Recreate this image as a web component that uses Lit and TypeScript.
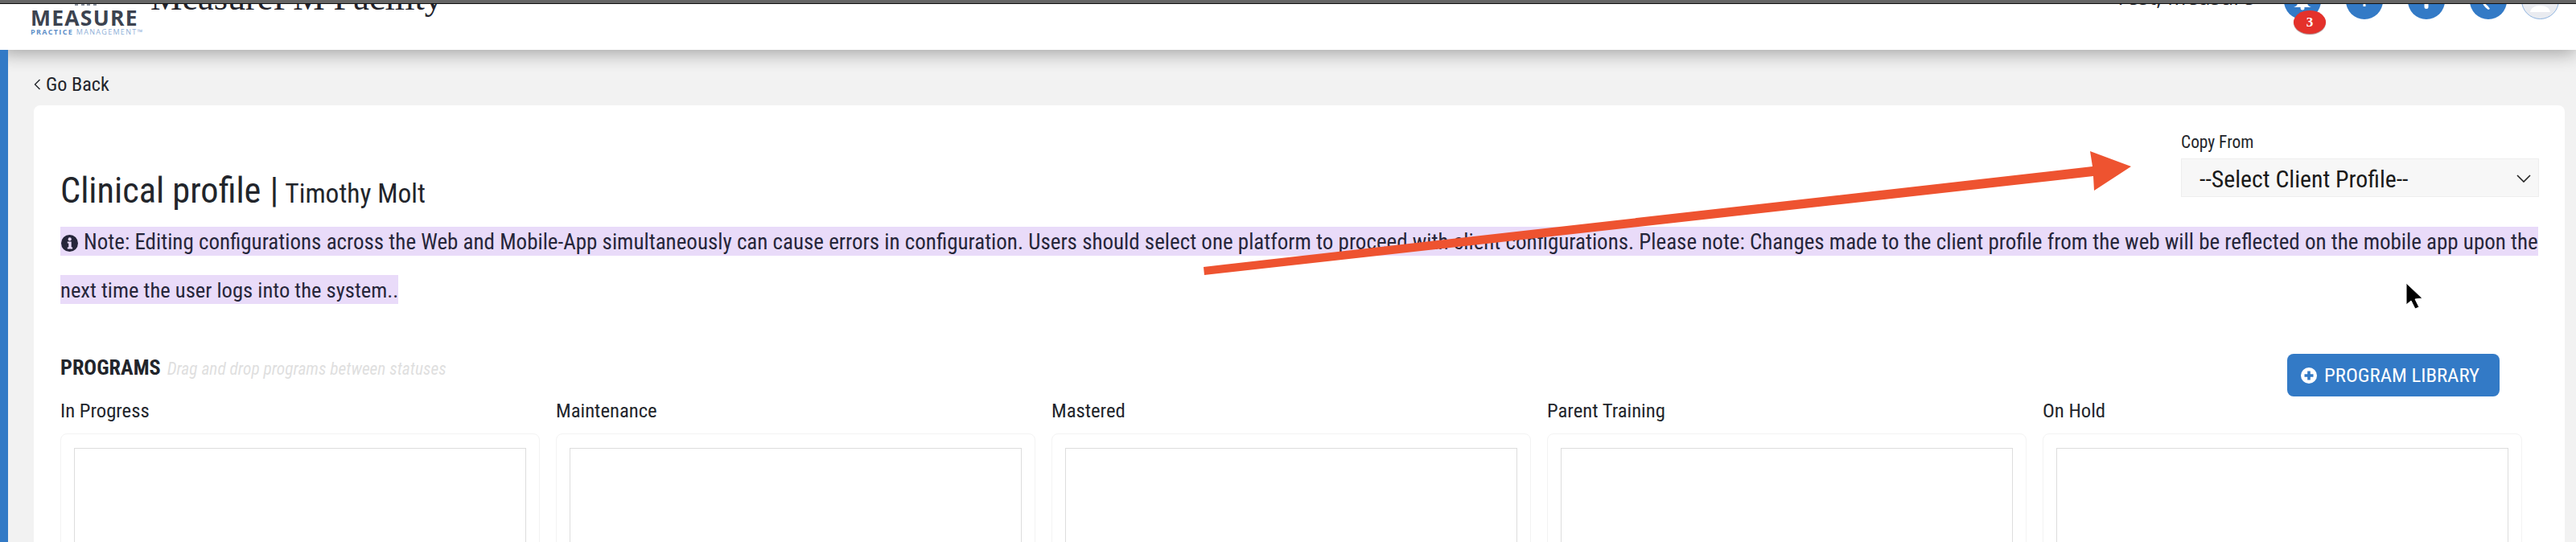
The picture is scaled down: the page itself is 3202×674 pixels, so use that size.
import { LitElement, html, css } from "lit";
import { customElement } from "lit/decorators.js";

const COLUMNS = ["In Progress", "Maintenance", "Mastered", "Parent Training", "On Hold"];

@customElement("app-root")
export class AppRoot extends LitElement {
  static styles = css`
    :host {
      display: flex;
      flex-direction: column;
      position: relative;
      width: 3202px;
      height: 674px;
      overflow: hidden;
      background: #f2f2f2;
      color: #22252b;
      font-family: "Roboto Condensed", "Open Sans", "Noto Sans", sans-serif;
    }
    .topbar {
      height: 4px;
      flex: none;
      background: #666;
      border-bottom: 1px solid #111;
      position: relative;
      z-index: 5;
    }
    .header {
      height: 57px;
      flex: none;
      display: flex;
      align-items: flex-end;
      padding: 0 21px 0 38px;
      background: #fff;
      overflow: hidden;
      position: relative;
      z-index: 3;
      box-shadow: 0 5px 22px rgba(0, 0, 0, 0.32);
    }
    .logo {
      display: flex;
      flex-direction: column;
      flex: none;
      width: 139px;
      padding-bottom: 18px;
    }
    .logo-bars {
      display: block;
      margin: 0 0 5px 55px;
    }
    .logo-word {
      font-family: "Open Sans", sans-serif;
      font-weight: 700;
      font-size: 26.5px;
      line-height: 20px;
      letter-spacing: 1.25px;
      color: #3c4350;
    }
    .logo-sub {
      font-family: "Open Sans", sans-serif;
      font-size: 9px;
      line-height: 9px;
      margin-top: 3px;
      letter-spacing: 1.32px;
      color: #8fb0d8;
      white-space: nowrap;
    }
    .logo-sub b {
      color: #5f8fc9;
      font-weight: 700;
    }
    .facility {
      flex: none;
      margin-left: 10px;
      padding-bottom: 42px;
      font-family: "Liberation Serif", serif;
      font-size: 44.3px;
      line-height: 44px;
      color: #23232b;
      white-space: nowrap;
    }
    .spacer {
      flex: 1;
    }
    .user {
      flex: none;
      font-family: "Open Sans", sans-serif;
      font-size: 26.5px;
      line-height: 30px;
      padding-bottom: 51px;
      margin-right: 37px;
      white-space: nowrap;
      color: #22252b;
    }
    .actions {
      display: flex;
      flex: none;
      align-items: flex-end;
      gap: 31px;
      padding-bottom: 38px;
    }
    .round {
      width: 46px;
      height: 46px;
      border-radius: 50%;
      background: #337ac6;
      flex: none;
    }
    .round svg {
      display: block;
    }
    .avatar {
      width: 47px;
      height: 47px;
      margin-left: -13px;
      box-sizing: border-box;
      background: #e9ebf0;
      border: 1px solid #8fb4e0;
      overflow: hidden;
    }
    .badge {
      position: absolute;
      left: 2851px;
      top: 13px;
      z-index: 5;
      width: 40px;
      height: 29px;
      border-radius: 50%;
      background: #e4312b;
      color: #fff;
      display: flex;
      align-items: center;
      justify-content: center;
      font: 700 17px/1 "Liberation Serif", serif;
      box-shadow: 0 1px 1px rgba(90, 0, 0, 0.5);
    }
    .main {
      flex: 1;
      display: flex;
      min-height: 0;
    }
    .rail {
      width: 10px;
      flex: none;
      background: #337ac6;
      position: relative;
      z-index: 4;
    }
    .content {
      flex: 1;
      min-width: 0;
      display: flex;
      flex-direction: column;
      padding: 0 14px 0 32px;
    }
    .back {
      flex: none;
      height: 52px;
      padding-top: 17px;
      display: flex;
      align-items: center;
      gap: 6px;
      font-size: 24.2px;
      line-height: 30px;
      color: #22252b;
    }
    .card {
      flex: 1;
      background: #fff;
      border-radius: 8px 8px 0 0;
      padding: 34px 32px 0 33px;
      min-height: 0;
      overflow: hidden;
    }
    .top {
      display: flex;
      justify-content: space-between;
      align-items: flex-start;
      height: 105px;
    }
    .title {
      margin: 47px 0 0;
      display: flex;
      align-items: baseline;
      font-size: 44.4px;
      line-height: 50px;
      font-weight: 400;
      color: #22252b;
    }
    .title .pipe {
      margin: 0 8px 0 11px;
    }
    .title small {
      font-size: 33.5px;
    }
    .copy {
      width: 445px;
      display: flex;
      flex-direction: column;
      gap: 8px;
    }
    .copy label {
      font-size: 21.4px;
      line-height: 24px;
    }
    .select {
      height: 48px;
      box-sizing: border-box;
      display: flex;
      align-items: center;
      justify-content: space-between;
      padding: 2px 9px 0 22px;
      background: #f7f7f7;
      border: 1px solid #eeeeee;
      font-size: 29.8px;
      color: #1a1a1a;
    }
    .note {
      margin: 0;
      font-size: 27px;
      color: #26263a;
      white-space: nowrap;
    }
    .line {
      display: flex;
      align-items: center;
      height: 60px;
    }
    .line-short {
      font-size: 26.6px;
    }
    .mark {
      line-height: 38px;
      height: 36px;
      background: #e9dbf9;
    }
    .note svg {
      vertical-align: -3px;
      margin: 0 7px 0 1px;
    }
    .prog-head {
      margin-top: 50px;
      height: 53px;
      display: flex;
      align-items: flex-start;
      justify-content: space-between;
      padding-right: 49px;
    }
    .prog-title {
      display: flex;
      align-items: baseline;
      gap: 8px;
      line-height: 34px;
    }
    .prog-title b {
      font-size: 26.2px;
      font-weight: 700;
      color: #22252b;
    }
    .prog-title i {
      font-size: 21.4px;
      color: #dfdfdf;
    }
    .btn {
      height: 53px;
      box-sizing: border-box;
      display: flex;
      align-items: center;
      gap: 9px;
      padding: 0 25px 0 17px;
      border: 0;
      border-radius: 8px;
      background: #337ac6;
      color: #fff;
      font-family: inherit;
      font-size: 24.8px;
      font-weight: 400;
    }
    .cols {
      display: grid;
      grid-template-columns: repeat(5, 596px);
      gap: 20px;
    }
    .col h3 {
      margin: 0 0 10px;
      font-size: 24.7px;
      line-height: 36px;
      font-weight: 400;
      color: #22252b;
    }
    .box {
      height: 200px;
      box-sizing: border-box;
      padding: 17px 16px 0;
      border: 1px solid #f3f3f3;
      border-radius: 8px;
    }
    .inner {
      height: 100%;
      box-sizing: border-box;
      border: 1px solid #dddddd;
    }
    .overlay {
      position: absolute;
      left: 0;
      top: 0;
      z-index: 6;
      pointer-events: none;
    }
  `;

  render() {
    return html`
      <div class="topbar"></div>
      <header class="header">
        <div class="logo">
          <svg class="logo-bars" width="28" height="3" viewBox="0 0 28 3" fill="#8b93a0">
            <rect x="0" width="4" height="3"></rect>
            <rect x="8" width="4" height="3"></rect>
            <rect x="15" width="4" height="3"></rect>
            <rect x="23" width="4" height="3"></rect>
          </svg>
          <div class="logo-word">MEASURE</div>
          <div class="logo-sub"><b>PRACTICE</b> MANAGEMENT™</div>
        </div>
        <div class="facility">MeasurePM Facility</div>
        <div class="spacer"></div>
        <div class="user">Test, Measure</div>
        <div class="actions">
          <div class="round">
            <svg width="46" height="46" viewBox="0 0 46 46" fill="#fff">
              <path d="M12 31c3-1 5-2 6-9h10c1 7 3 8 6 9z"></path>
              <circle cx="23" cy="32" r="2.5"></circle>
            </svg>
          </div>
          <div class="round">
            <svg width="46" height="46" viewBox="0 0 46 46" fill="#fff">
              <rect x="21.5" y="20" width="3" height="10"></rect>
            </svg>
          </div>
          <div class="round">
            <svg width="46" height="46" viewBox="0 0 46 46" fill="#fff">
              <rect x="20.5" y="20" width="5" height="13" rx="2.5"></rect>
            </svg>
          </div>
          <div class="round">
            <svg width="46" height="46" viewBox="0 0 46 46" fill="#fff">
              <path d="M14 20c1 6 4 11 9 14l2-1-3-4c-2-1-3-3-3-6z"></path>
            </svg>
          </div>
          <div class="round avatar">
            <svg width="45" height="45" viewBox="0 0 45 45">
              <path d="M10 37c1-5 5-8 12.5-8S34 32 35 37z" fill="#fff"></path>
            </svg>
          </div>
        </div>
      </header>
      <div class="badge">3</div>
      <div class="main">
        <div class="rail"></div>
        <div class="content">
          <div class="back">
            <svg width="9" height="14" viewBox="0 0 9 14" fill="none" stroke="#22252b" stroke-width="1.4">
              <path d="M7.5 1 1.5 7l6 6"></path>
            </svg>
            <span>Go Back</span>
          </div>
          <section class="card">
            <div class="top">
              <h1 class="title">
                <span>Clinical profile</span><span class="pipe">|</span><small>Timothy Molt</small>
              </h1>
              <div class="copy">
                <label>Copy From</label>
                <div class="select" role="combobox">
                  <span>--Select Client Profile--</span>
                  <svg width="18" height="10" viewBox="0 0 18 10" fill="none" stroke="#222" stroke-width="1.6">
                    <path d="M1 1l8 8 8-8"></path>
                  </svg>
                </div>
              </div>
            </div>
            <div class="note">
              <div class="line"><span class="mark"><svg width="21" height="21" viewBox="0 0 21 21">
                <circle cx="10.5" cy="10.5" r="10.5" fill="#26263a"></circle>
                <circle cx="10.7" cy="5.4" r="2.1" fill="#e9dbf9"></circle>
                <path d="M7.8 8.6h4.9v7h1.4v1.9H7.8v-1.9h1.5v-5.1H7.8z" fill="#e9dbf9"></path>
              </svg>Note: Editing configurations across the Web and Mobile-App simultaneously can cause errors in configuration. Users should select one platform to proceed with client configurations. Please note: Changes made to the client profile from the web will be reflected on the mobile app upon the</span></div>
              <div class="line line-short"><span class="mark">next time the user logs into the system..</span></div>
            </div>
            <div class="prog-head">
              <div class="prog-title">
                <b>PROGRAMS</b><i>Drag and drop programs between statuses</i>
              </div>
              <button class="btn">
                <svg width="20" height="20" viewBox="0 0 20 20">
                  <circle cx="10" cy="10" r="10" fill="#fff"></circle>
                  <path d="M8.2 4.5h3.6v3.7h3.7v3.6h-3.7v3.7H8.2v-3.7H4.5V8.2h3.7z" fill="#337ac6"></path>
                </svg>
                PROGRAM LIBRARY
              </button>
            </div>
            <div class="cols">
              ${COLUMNS.map(
                (c) => html`
                  <div class="col">
                    <h3>${c}</h3>
                    <div class="box"><div class="inner"></div></div>
                  </div>
                `
              )}
            </div>
          </section>
        </div>
      </div>
      <svg class="overlay" width="3202" height="674" viewBox="0 0 3202 674">
        <path d="M1496 332 2601 207 2598 188 2649 207 2603 237 2602 219 1497 342z" fill="#ee5330"></path>
        <path d="M2991 352v27l6-5 5 10 5-2-5-10 9-1z" fill="#000" stroke="#fff" stroke-width="1"></path>
      </svg>
    `;
  }
}
